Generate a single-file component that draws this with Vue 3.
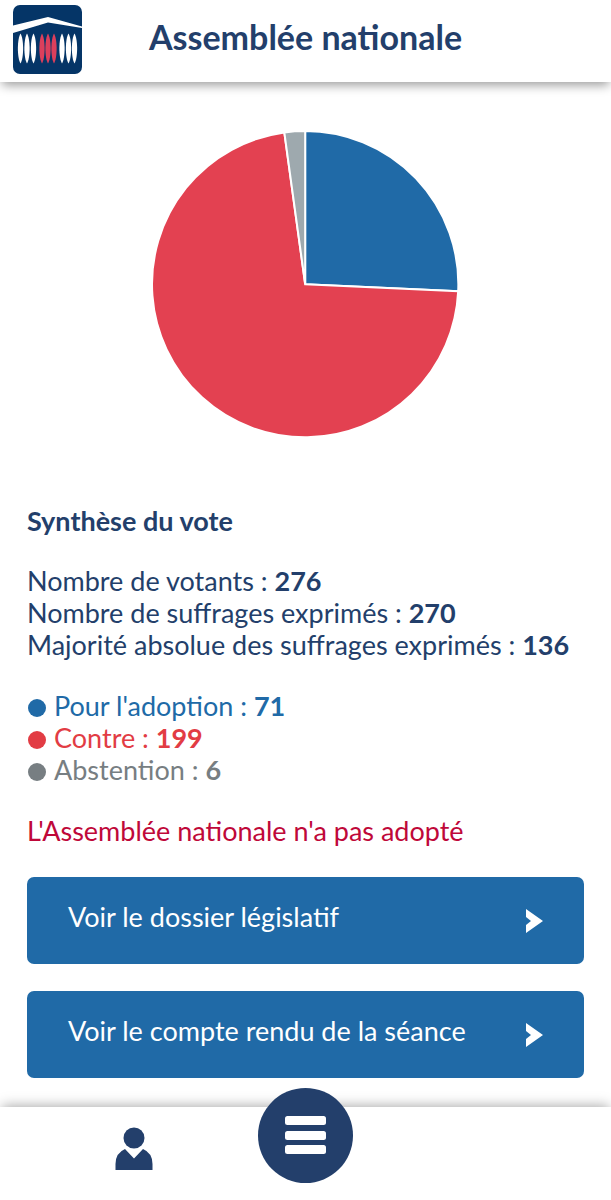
<!-- src/views/ScrutinView.vue -->
<template>
  <div class="page">
    <header class="header">
      <a href="#" class="logo" aria-label="Accueil">
        <svg viewBox="0 0 69 69" width="69" height="69">
          <rect width="69" height="69" rx="7" fill="#053567" />
          <path d="M0 20.500 L35 12 L69 21.500 V23 L35 17.500 L0 28 Z" fill="#fff" />
          <path
            v-for="col in columns"
            :key="col.x"
            :d="`M${col.x} 28.500 C${col.x + 3.5} 34 ${col.x + 3.5} 53 ${col.x} 58.500 C${col.x - 3.5} 53 ${col.x - 3.5} 34 ${col.x} 28.500 Z`"
            :fill="col.color"
          />
        </svg>
      </a>
      <h1 class="title">Assemblée nationale</h1>
    </header>

    <main class="content">
      <svg class="chart" viewBox="0 0 306 306" role="img" aria-label="Synthèse du vote">
        <path
          v-for="slice in slices"
          :key="slice.label"
          :d="slice.path"
          :fill="slice.fill"
          stroke="#fff"
          stroke-width="2"
        />
      </svg>

      <h2 class="subtitle">Synthèse du vote</h2>

      <ul class="list">
        <li v-for="item in totals" :key="item.label">
          {{ item.label }} : <strong>{{ item.value }}</strong>
        </li>
      </ul>

      <ul class="list">
        <li v-for="vote in votes" :key="vote.label" :class="vote.type">
          <span class="dot"></span>{{ vote.label }} : <strong>{{ vote.value }}</strong>
        </li>
      </ul>

      <p class="result">L'Assemblée nationale n'a pas adopté</p>

      <div class="links">
        <a v-for="link in links" :key="link" href="#" class="link">
          <span class="link-text">{{ link }}</span>
          <svg viewBox="0 0 17 24" width="17" height="24">
            <path d="M0 0 L17 12 L0 24 V16 L5 12 L0 8 Z" fill="#fff" />
          </svg>
        </a>
      </div>
    </main>

    <nav class="navbar">
      <a href="#" class="account" aria-label="Mon compte">
        <svg viewBox="0 0 38 43" width="38" height="43">
          <circle cx="19" cy="11" r="10.500" fill="#233f6b" />
          <path d="M10 22 L19 31.500 L28 22 Q37.500 26 37.500 37 V43 H0.500 V37 Q0.500 26 10 22 Z" fill="#233f6b" />
        </svg>
      </a>
      <button type="button" class="menu" aria-label="Menu">
        <svg viewBox="0 0 41 39" width="41" height="39">
          <rect v-for="y in [0, 15, 29]" :key="y" :y="y" width="41" height="9" rx="2.500" fill="#fff" />
        </svg>
      </button>
    </nav>
  </div>
</template>

<script setup>
import { computed } from 'vue'

const columns = [7.5, 14, 20.5, 29, 35, 41, 49, 55.5, 61.5].map((x, i) => ({
  x,
  color: i > 2 && i < 6 ? '#dc3f5c' : '#fff'
}))

const totals = [
  { label: 'Nombre de votants', value: 276 },
  { label: 'Nombre de suffrages exprimés', value: 270 },
  { label: 'Majorité absolue des suffrages exprimés', value: 136 }
]

const votes = [
  { label: "Pour l'adoption", value: 71, type: 'pour', fill: '#206aa7' },
  { label: 'Contre', value: 199, type: 'contre', fill: '#e34151' },
  { label: 'Abstention', value: 6, type: 'abstention', fill: '#9ea9ae' }
]

const links = ['Voir le dossier législatif', 'Voir le compte rendu de la séance']

const slices = computed(() => {
  const total = votes.reduce((sum, v) => sum + v.value, 0)
  const point = (n) => {
    const a = (n / total) * Math.PI * 2
    return `${153 + 153 * Math.sin(a)} ${153 - 153 * Math.cos(a)}`
  }
  let start = 0
  return votes.map((v) => {
    const end = start + v.value
    const large = v.value > total / 2 ? 1 : 0
    const path = `M153 153 L${point(start)} A153 153 0 ${large} 1 ${point(end)} Z`
    start = end
    return { ...v, path }
  })
})
</script>

<style>
body {
  margin: 0;
  background: #fff;
}
</style>

<style scoped>
.page {
  display: flex;
  flex-direction: column;
  min-height: 100vh;
  font-family: Lato, "Liberation Sans", sans-serif;
  font-size: 27px;
  line-height: 32px;
  color: #233f6b;
}
.header {
  position: sticky;
  top: 0;
  z-index: 2;
  display: grid;
  grid-template-columns: 1fr auto 1fr;
  align-items: center;
  box-sizing: border-box;
  height: 82px;
  padding: 0 13px 4px;
  background: #fff;
  box-shadow: 0 5px 10px -2px rgba(0, 0, 0, 0.4);
}
.logo svg { display: block; }
.title {
  margin: 0;
  padding-bottom: 4px;
  font-size: 34px;
  line-height: 40px;
  font-weight: 700;
}
.content {
  flex: 1;
  padding: 49px 27px 28px;
}
.chart {
  display: block;
  width: 55%;
  margin: 0 auto 68px;
}
.subtitle {
  margin: 0 0 28px;
  font-size: 27px;
  font-weight: 700;
}
.list {
  list-style: none;
  margin: 0 0 29px;
  padding: 0;
}
.dot {
  display: inline-block;
  width: 18px;
  height: 18px;
  margin: 0 8px 0 1px;
  border-radius: 50%;
  background: currentColor;
  vertical-align: -1px;
}
.pour { color: #206aa7; }
.contre { color: #e23c44; }
.abstention { color: #777e82; }
.result {
  margin: 0 0 30px;
  color: #bf0839;
}
.links {
  display: flex;
  flex-direction: column;
  gap: 27px;
}
.link {
  display: flex;
  align-items: center;
  justify-content: space-between;
  padding: 24px 41px;
  border-radius: 7px;
  background: #206aa7;
  color: #fff;
  text-decoration: none;
}
.link-text { padding-bottom: 7px; }
.navbar {
  position: sticky;
  bottom: 0;
  z-index: 2;
  display: grid;
  grid-template-columns: 1fr 95px 1fr;
  box-sizing: border-box;
  height: 93px;
  padding: 0 10px;
  background: #fff;
  box-shadow: 0 -3px 12px -2px rgba(0, 0, 0, 0.35);
}
.account {
  align-self: center;
  justify-self: center;
  padding-bottom: 10px;
}
.account svg { display: block; }
.menu {
  display: flex;
  align-items: center;
  justify-content: center;
  width: 95px;
  height: 95px;
  margin-top: -19px;
  padding: 0;
  border: none;
  border-radius: 50%;
  background: #233f6b;
  cursor: pointer;
}
</style>
